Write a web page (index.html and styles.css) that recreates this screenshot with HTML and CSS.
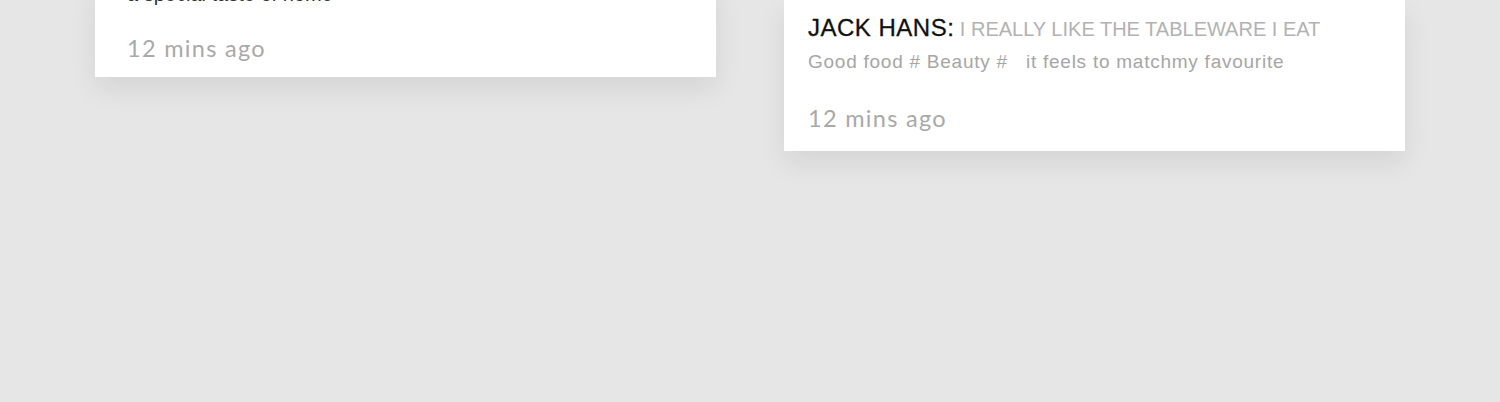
FILE: index.html
```html
<!DOCTYPE html>
<html lang="en">
<head>
  <meta charset="UTF-8" />
  <title>Comments</title>
  <link rel="stylesheet" href="styles.css">
</head>
<body>

  <div class="board">
    <div class="comment-card card-left">
      <p class="comment-cut">a special taste of home</p>
      <p class="comment-time">12 mins ago</p>
    </div>

    <div class="comment-card card-right">
      <p class="comment-head">
        <span class="comment-user">JACK HANS:</span>
        <span class="comment-title">I REALLY LIKE THE TABLEWARE I EAT</span>
      </p>
      <p class="comment-body">Good food # Beauty # &nbsp; it feels to matchmy favourite</p>
      <p class="comment-time">12 mins ago</p>
    </div>
  </div>

</body>
</html>
```

FILE: styles.css
```css
body {
  margin: 0;
  background: #e6e6e6;
  font-family: 'Liberation Sans', Arial, sans-serif;
  height: 402px;
  overflow: hidden;
}

.board {
  display: flex;
  align-items: flex-start;
  gap: 68px;
  padding-left: 95px;
}

.comment-card {
  width: 621px;
  box-sizing: border-box;
  background: #ffffff;
  box-shadow: 0 12px 26px rgba(0, 0, 0, 0.08);
}

.comment-card p {
  margin: 0;
}

.card-left {
  margin-top: -21px;
  padding: 0 32px 14px;
}

.card-right {
  padding: 12px 24px 18px;
}

.comment-cut {
  font-size: 20px;
  line-height: 30px;
  color: #333;
}

.card-left .comment-time {
  margin-top: 24px;
}

.comment-head {
  line-height: 32px;
  white-space: nowrap;
}

.comment-user {
  font-size: 24px;
  color: #111;
  letter-spacing: 0.5px;
  -webkit-text-stroke: 0.3px #111;
}

.comment-title {
  font-size: 20px;
  color: #b2b2b2;
  letter-spacing: 0;
  margin-left: 1px;
}

.comment-body {
  margin-top: 6px;
  font-size: 19px;
  line-height: 30px;
  color: #a6a6a6;
  letter-spacing: 0.75px;
}

.comment-time {
  font-family: Lato, 'Open Sans', sans-serif;
  font-size: 23.5px;
  line-height: 30px;
  color: #a9a9a9;
  letter-spacing: 1.3px;
}

.card-right .comment-time {
  margin-top: 26px;
}
```
